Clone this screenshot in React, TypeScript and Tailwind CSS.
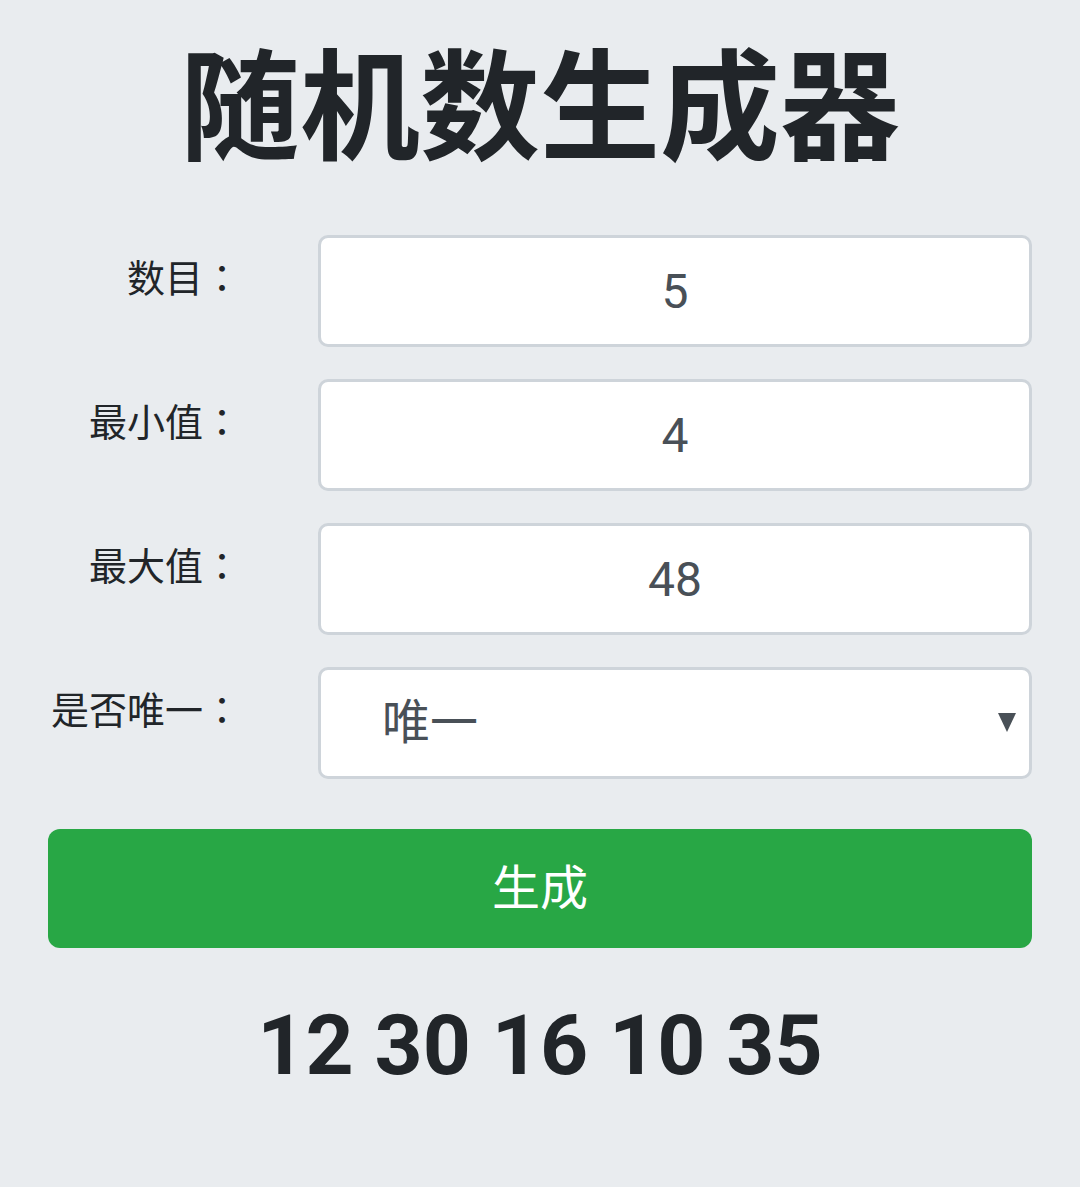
import { useState } from 'react'

const rows = [
    { label: '数目', value: '5' },
    { label: '最小值', value: '4' },
    { label: '最大值', value: '48' },
]

function Label({ text }: { text: string }) {
    return (
        <label className="w-[193px] shrink-0 pt-[12px] text-right text-[38px] leading-[1.5]">
            {text}
            <span style={{ fontFamily: '"Noto Sans CJK JP", sans-serif' }}>：</span>
        </label>
    )
}

export default function App() {
    const [unique, setUnique] = useState('唯一')
    const [result] = useState([12, 30, 16, 10, 35])

    return (
        <section
            className="min-h-screen bg-[#e9ecef] px-12 text-[#212529]"
            style={{ fontFamily: 'Roboto, "Noto Sans CJK SC", sans-serif' }}
        >
            <h1 className="pt-[38px] text-center text-[120px] font-bold leading-[1.2]">随机数生成器</h1>

            <div className="mt-[53px] flex flex-col gap-8">
                {rows.map((row) => (
                    <div key={row.label} className="flex items-start">
                        <Label text={row.label} />
                        <input
                            defaultValue={row.value}
                            className="ml-[77px] h-[112px] flex-1 rounded-[10px] border-[3px] border-[#ced4da] bg-white text-center text-[48px] text-[#495057] outline-none"
                        />
                    </div>
                ))}
                <div className="flex items-start">
                    <Label text="是否唯一" />
                    <div className="relative ml-[77px] flex-1">
                        <select
                            value={unique}
                            onChange={(e) => setUnique(e.target.value)}
                            className="h-[112px] w-full appearance-none rounded-[10px] border-[3px] border-[#ced4da] bg-white pl-[61px] text-[48px] text-[#495057] outline-none"
                        >
                            <option>唯一</option>
                            <option>不唯一</option>
                        </select>
                        <svg
                            className="pointer-events-none absolute right-[16px] top-[46px]"
                            width="18"
                            height="19"
                            viewBox="0 0 18 19"
                        >
                            <polygon points="0,0 18,0 9,19" fill="#495057" />
                        </svg>
                    </div>
                </div>
            </div>

            <button className="mt-[50px] h-[119px] w-full rounded-[12px] bg-[#28a745] text-[48px] text-white">
                生成
            </button>

            <div className="mt-[48px] text-center text-[84px] font-bold leading-[1.2]">
                {result.join(' ')}
            </div>
        </section>
    )
}
